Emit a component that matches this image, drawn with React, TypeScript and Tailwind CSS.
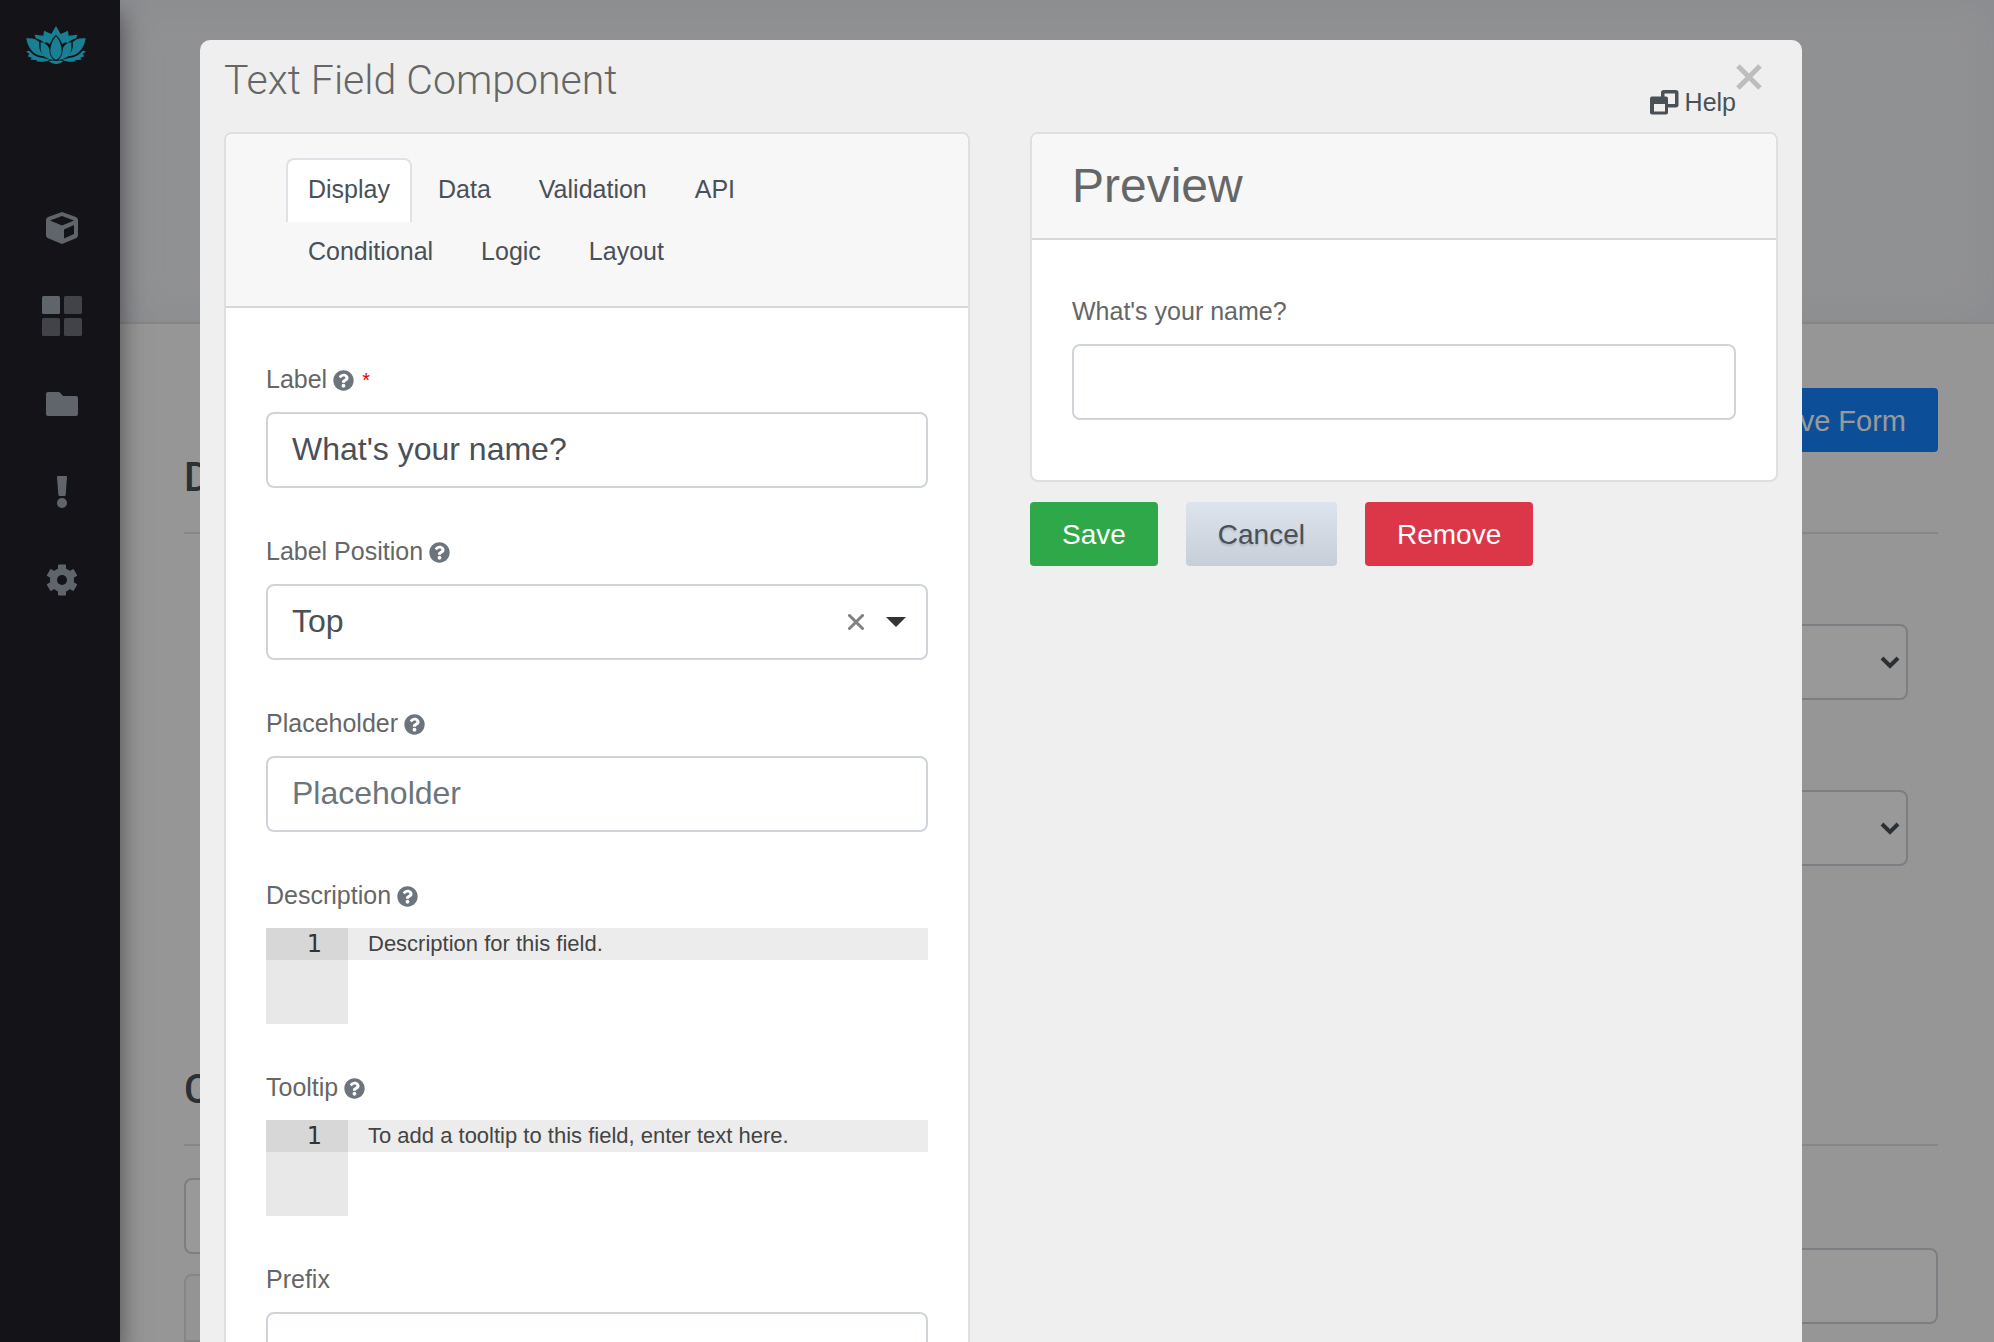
import { useState, type ReactNode } from "react";
import { FaQuestionCircle } from "react-icons/fa";

const inputClass =
  "block h-[76px] w-full rounded-lg border-2 border-[#ced4da] bg-white px-6 pb-[2px] text-[32px] text-[#495057] placeholder:text-[#6c757d] outline-none";

function Lotus() {
  const half = (
    <>
      <path d="M168 78 L182 102 L204 92 L206 107 L232 104 L229 115 C217 118 209 123 204 129 C197 126 191 128 187 133 C182 121 176 111 168 104 Z" />
      <path d="M214 127 C200 129 190 137 188 149 C188 162 183 171 175 179 C198 179 214 166 214 145 Z" />
      <path d="M257 115 C240 113 225 118 218 127 C221 146 214 162 200 169 C230 169 251 150 257 116 Z" />
      <path d="M258 154 L248 152 C240 163 226 171 210 173 L186 179 C196 185 216 187 228 184 L225 180 L244 179 L241 173 L253 169 L248 162 Z" />
    </>
  );
  return (
    <svg viewBox="78 78 180 114" className="h-[38px] w-[60px] fill-[#2bd5f5]" aria-hidden="true">
      {half}
      <g transform="matrix(-1 0 0 1 336 0)">{half}</g>
      <path d="M168 108 C157 121 151 138 151 152 C151 166 159 175 168 179 C177 175 185 166 185 152 C185 138 179 121 168 108 Z" />
      <path d="M146 184 C156 179 162 183 168 183 C174 183 180 179 190 184 C182 190 176 192 168 192 C160 192 154 190 146 184 Z" />
    </svg>
  );
}

function CubeIcon() {
  return (
    <svg viewBox="0 0 32 32" className="size-8 fill-[#a0a8b4]" aria-hidden="true">
      <path
        fillRule="evenodd"
        d="M16 0 L30 5 Q32 6 32 8 V23 Q32 25 30.500 26 L16 32 L1.500 26 Q0 25 0 23 V8 Q0 6 2 5 Z M16 4 L4 8.500 L16 13.500 L28 8.500 Z M18 17.500 V26.500 L28 22 V13 Z"
      />
    </svg>
  );
}

function GridIcon() {
  return (
    <svg viewBox="0 0 40 40" className="size-10" aria-hidden="true">
      <rect width="18" height="18" rx="1.500" fill="#a0a8b4" />
      <rect x="22" width="18" height="18" rx="1.500" fill="#6e7178" />
      <rect y="22" width="18" height="18" rx="1.500" fill="#6e7178" />
      <rect x="22" y="22" width="18" height="18" rx="1.500" fill="#6e7178" />
    </svg>
  );
}

function FolderIcon() {
  return (
    <svg viewBox="0 0 32 24" className="h-6 w-8 fill-[#a0a8b4]" aria-hidden="true">
      <path d="M2 0 H12.500 Q13.500 0 14.200 0.800 L17 4 H30 Q32 4 32 6 V22 Q32 24 30 24 H2 Q0 24 0 22 V2 Q0 0 2 0 Z" />
    </svg>
  );
}

function AlertIcon() {
  return (
    <svg viewBox="0 0 10 32" className="h-8 w-[10px] fill-[#a0a8b4]" aria-hidden="true">
      <path d="M1 0 H9 Q10 0 10 1 L8.700 18.500 Q8.500 20 7.500 20 H2.500 Q1.500 20 1.300 18.500 L0 1 Q0 0 1 0 Z" />
      <circle cx="5" cy="27" r="5" />
    </svg>
  );
}

function GearIcon() {
  return (
    <svg viewBox="-16 -16 32 32" className="size-8" aria-hidden="true">
      <g fill="#a0a8b4">
        {[0, 60, 120].map((angle) => (
          <rect key={angle} x="-4" y="-15.500" width="8" height="31" rx="0.800" transform={`rotate(${angle})`} />
        ))}
        <circle r="12" />
      </g>
      <circle r="5" fill="#202128" />
    </svg>
  );
}

const navItems: { label: string; icon: ReactNode }[] = [
  { label: "Resources", icon: <CubeIcon /> },
  { label: "Forms", icon: <GridIcon /> },
  { label: "Files", icon: <FolderIcon /> },
  { label: "Alerts", icon: <AlertIcon /> },
  { label: "Settings", icon: <GearIcon /> },
];

function Sidebar() {
  return (
    <aside className="relative z-10 w-[120px] shrink-0 bg-[#202128] shadow-[0_14px_24px_rgba(0,0,0,0.5)]">
      <a href="#home" aria-label="Home" className="flex h-[184px] items-start pt-[26px] pl-[26px]">
        <Lotus />
      </a>
      <nav className="flex flex-col">
        {navItems.map((item) => (
          <a
            key={item.label}
            href={`#${item.label.toLowerCase()}`}
            aria-label={item.label}
            className="flex h-[88px] items-center justify-center pl-1"
          >
            {item.icon}
          </a>
        ))}
      </nav>
    </aside>
  );
}

function PageSelect({ label }: { label: string }) {
  return (
    <div className="relative">
      <select
        aria-label={label}
        className="block h-[76px] w-full appearance-none rounded-lg border-2 border-[#ced4da] bg-white px-6 text-[32px]"
      />
      <svg
        viewBox="0 0 20 14"
        className="pointer-events-none absolute top-8 right-2 h-[14px] w-5 fill-none stroke-[#495057] stroke-[4]"
        aria-hidden="true"
      >
        <path d="M2 2 L10 10 L18 2" />
      </svg>
    </div>
  );
}

function FormPage() {
  return (
    <main className="min-w-0 flex-1">
      <div className="h-[324px] border-b-2 border-[#dedfe3] bg-[#f1f2f4] shadow-[inset_0_0_40px_rgba(205,213,228,0.35)]" />
      <div className="pt-16 pr-14 pl-16">
        <div className="flex h-[114px] justify-between">
          <h2 className="self-end font-['Roboto'] text-[40px] leading-[48px] font-medium text-[#495057]">D</h2>
          <button type="button" className="h-16 rounded bg-[#1482fc] px-8 pt-1 text-[29px] text-white">
            Save Form
          </button>
        </div>
        <hr className="mt-[30px] border-t-2 border-[#e1e1e1]" />
        <div className="flex flex-col gap-[90px] px-[30px] pt-[90px]">
          <PageSelect label="Form type" />
          <PageSelect label="Form display" />
        </div>
        <h2 className="mt-[200px] font-['Roboto'] text-[40px] leading-[48px] font-medium text-[#495057]">C</h2>
        <hr className="mt-[30px] border-t-2 border-[#e1e1e1]" />
        <div className="grid grid-cols-[1fr_3fr] gap-10 pt-8">
          <div className="flex flex-col gap-5">
            <input aria-label="Search fields" className={inputClass} />
            <div className="h-[68px] rounded-t-lg border-2 border-[#dfdfdf] bg-[#f7f7f7]" />
          </div>
          <input aria-label="Canvas field" className={`${inputClass} mt-[70px]`} />
        </div>
      </div>
    </main>
  );
}

function Field({
  id,
  label,
  help = true,
  required = false,
  children,
}: {
  id: string;
  label: string;
  help?: boolean;
  required?: boolean;
  children: ReactNode;
}) {
  return (
    <div>
      <label htmlFor={id} className="mb-3 flex h-10 items-center gap-[6px] text-[25px] text-[#666]">
        {label}
        {help && <FaQuestionCircle className="size-[21px] text-[#6c757d]" aria-hidden="true" />}
        {required && <span className="pl-[2px] text-[20px] text-[#eb0000]">*</span>}
      </label>
      {children}
    </div>
  );
}

function CodeEditor({ id, text }: { id: string; text: string }) {
  return (
    <div className="flex h-24">
      <div className="w-[82px] shrink-0 bg-[#e8e8e8]">
        <div className="h-8 bg-[#d7d7d7] pr-[26px] text-right font-['DejaVu_Sans'] text-[24px] leading-8 text-[#333]">
          1
        </div>
      </div>
      <textarea
        id={id}
        rows={1}
        defaultValue={text}
        className="h-8 min-w-0 flex-1 resize-none overflow-hidden bg-[#ececec] px-5 text-[22px] leading-8 text-[#444] outline-none"
      />
    </div>
  );
}

const tabs = ["Display", "Data", "Validation", "API", "Conditional", "Logic", "Layout"];

function SettingsCard() {
  const [active, setActive] = useState("Display");
  return (
    <section className="rounded-t-lg border-2 border-[#dfdfdf] bg-white">
      <div className="rounded-t-lg border-b-2 border-[#d8d8d8] bg-[#f7f7f7] px-[60px] py-6">
        <div role="tablist" className="flex flex-wrap gap-x-1">
          {tabs.map((tab) => (
            <button
              key={tab}
              type="button"
              role="tab"
              aria-selected={tab === active}
              onClick={() => setActive(tab)}
              className={`-mb-[2px] h-16 rounded-t-lg border-2 border-b-0 px-5 pb-[2px] text-[25px] text-[#495057] ${
                tab === active ? "border-[#dee2e6] bg-white" : "border-transparent"
              }`}
            >
              {tab}
            </button>
          ))}
        </div>
      </div>
      <div className="flex flex-col gap-11 px-10 pt-[52px] pb-10">
        <Field id="label" label="Label" required>
          <input id="label" defaultValue="What's your name?" className={inputClass} />
        </Field>
        <Field id="position" label="Label Position">
          <div className="relative">
            <select id="position" className={`${inputClass} appearance-none`}>
              <option>Top</option>
            </select>
            <div className="pointer-events-none absolute inset-y-0 right-[22px] flex items-center gap-[22px]">
              <button type="button" aria-label="Clear label position" className="pointer-events-auto">
                <svg viewBox="0 0 16 16" className="size-4 fill-none stroke-[#808080] stroke-[3]" aria-hidden="true">
                  <path d="M1.500 1.500 L14.500 14.500 M14.500 1.500 L1.500 14.500" strokeLinecap="round" />
                </svg>
              </button>
              <svg viewBox="0 0 20 10" className="h-[10px] w-5 fill-[#333]" aria-hidden="true">
                <path d="M0 0 H20 L10 10 Z" />
              </svg>
            </div>
          </div>
        </Field>
        <Field id="placeholder" label="Placeholder">
          <input id="placeholder" placeholder="Placeholder" className={inputClass} />
        </Field>
        <Field id="description" label="Description">
          <CodeEditor id="description" text="Description for this field." />
        </Field>
        <Field id="tooltip" label="Tooltip">
          <CodeEditor id="tooltip" text="To add a tooltip to this field, enter text here." />
        </Field>
        <Field id="prefix" label="Prefix" help={false}>
          <input id="prefix" className={inputClass} />
        </Field>
      </div>
    </section>
  );
}

function PreviewColumn() {
  return (
    <div>
      <section className="rounded-lg border-2 border-[#dfdfdf] bg-white">
        <h4 className="rounded-t-lg border-b-2 border-[#d8d8d8] bg-[#f7f7f7] px-10 py-6 text-[48px] leading-[56px] text-[#666]">
          Preview
        </h4>
        <div className="px-10 pt-[52px] pb-[60px]">
          <Field id="preview-name" label="What's your name?" help={false}>
            <input id="preview-name" className={inputClass} />
          </Field>
        </div>
      </section>
      <div className="mt-5 flex gap-7 text-[28px]">
        <button type="button" className="h-16 rounded bg-[#2fa84a] px-8 pt-[2px] text-white">
          Save
        </button>
        <button
          type="button"
          className="h-16 rounded bg-linear-to-b from-[#dde4ee] to-[#c6ced8] px-8 pt-[2px] text-[#495057] text-shadow-[0_2px_2px_rgba(0,0,0,0.15)]"
        >
          Cancel
        </button>
        <button type="button" className="h-16 rounded bg-[#dc3748] px-8 pt-[2px] text-white">
          Remove
        </button>
      </div>
    </div>
  );
}

function HelpIcon() {
  return (
    <svg viewBox="0 0 29 25" className="h-[25px] w-[29px]" aria-hidden="true">
      <rect x="12.750" y="1.750" width="14" height="14" rx="1" fill="none" stroke="#495057" strokeWidth="3.500" />
      <rect y="6.500" width="18" height="18" rx="2" fill="#495057" />
      <rect x="4" y="14" width="11" height="7.500" fill="#efefef" />
    </svg>
  );
}

function ComponentModal() {
  return (
    <div className="fixed inset-0 z-20 overflow-hidden bg-black/40 pt-10 pr-48 pl-[200px]">
      <div
        role="dialog"
        aria-modal="true"
        aria-labelledby="dialog-title"
        className="rounded-t-[10px] bg-[#efefef] px-6 pb-6"
      >
        <header className="flex h-[92px] items-start pr-4">
          <h1
            id="dialog-title"
            className="flex-1 pt-4 font-['Roboto'] text-[41px] leading-[48px] font-light text-[#666]"
          >
            Text Field Component
          </h1>
          <a href="#help" className="mt-11 flex items-center gap-[6px] text-[25px] text-[#495057]">
            <HelpIcon />
            Help
          </a>
          <button type="button" aria-label="Close" className="mt-6">
            <svg viewBox="0 0 26 26" className="size-[26px] fill-none stroke-[#bdbdbd] stroke-[5]" aria-hidden="true">
              <path d="M2 2 L24 24 M24 2 L2 24" />
            </svg>
          </button>
        </header>
        <div className="grid grid-cols-[746fr_748fr] items-start gap-[60px]">
          <SettingsCard />
          <PreviewColumn />
        </div>
      </div>
    </div>
  );
}

export default function App() {
  return (
    <div className="flex h-screen overflow-hidden bg-[#fafafa] font-['Liberation_Sans',Arial,sans-serif]">
      <Sidebar />
      <FormPage />
      <ComponentModal />
    </div>
  );
}
